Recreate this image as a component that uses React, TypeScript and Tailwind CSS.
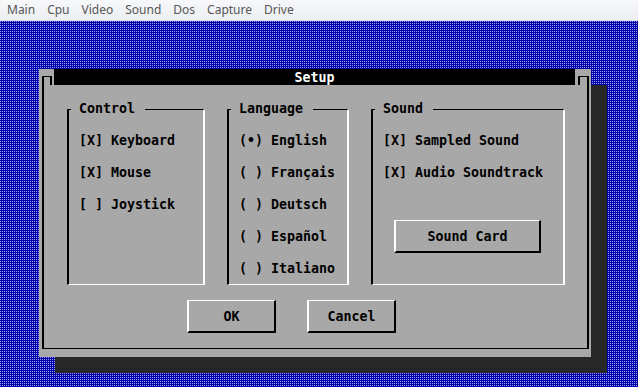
const menuItems = ["Main", "Cpu", "Video", "Sound", "Dos", "Capture", "Drive"];

const MenuBar = () => {
  return (
    <div className="h-[21px] flex-none flex items-center gap-[12px] pl-[7px] bg-linear-to-b from-[#f7f8fa] to-[#eceef2] border-b border-[#d9dde3] font-['Noto_Sans',sans-serif] text-[12px] text-[#565656]">
      {menuItems.map((item) => (
        <span key={item} className="leading-[20px]">{item}</span>
      ))}
    </div>
  );
};

interface GroupBoxProps {
  title: string;
  width: string;
  children: React.ReactNode;
}

const GroupBox = ({ title, width, children }: GroupBoxProps) => {
  return (
    <div className={`relative h-[176px] ${width} border-l-2 border-t border-r-2 border-b border-l-black border-t-black border-r-white border-b-white pt-[15px] pl-[10px]`}>
      <span className="absolute top-[-9px] left-[2px] pl-[8px] pr-[10px] bg-[#a8a8a8] leading-[16px]">{title}</span>
      {children}
    </div>
  );
};

const Row = ({ label }: { label: string }) => {
  return <div className="leading-[32px] whitespace-pre">{label}</div>;
};

const DosButton = ({ label, width }: { label: string; width: string }) => {
  return (
    <div className={`h-[33px] ${width} flex items-center justify-center pt-[2px] border-l-2 border-t border-r-2 border-b-2 border-l-white border-t-white border-r-black border-b-black`}>
      {label}
    </div>
  );
};

const SetupDialog = () => {
  return (
    <div className="w-[552px] h-[288px] flex flex-col bg-[#a8a8a8] shadow-[16px_16px_0_#272727] text-black font-['DejaVu_Sans_Mono','Liberation_Mono',monospace] text-[13.3px] font-bold">
      {/* title row */}
      <div className="h-[16px] flex-none flex">
        <div className="w-[3px]" />
        <div className="w-[10px] h-[9px] mt-[7px] border-l-2 border-t border-r-2 border-black" />
        <div className="w-[2px]" />
        <div className="w-[521px] bg-black text-white text-center leading-[16px] pt-px">Setup</div>
        <div className="w-[3px]" />
        <div className="w-[11px] h-[9px] mt-[7px] border-l-2 border-t border-r-2 border-black" />
        <div className="w-[2px]" />
      </div>

      {/* body */}
      <div className="h-[264px] flex-none ml-[3px] mr-[2px] border-l-2 border-r-2 border-b border-black pl-[23px] pt-[24px]">
        <div className="flex gap-[22px]">
          <GroupBox title="Control" width="w-[138px]">
            <Row label="[X] Keyboard" />
            <Row label="[X] Mouse" />
            <Row label="[ ] Joystick" />
          </GroupBox>
          <GroupBox title="Language" width="w-[122px]">
            <Row label="(•) English" />
            <Row label="( ) Français" />
            <Row label="( ) Deutsch" />
            <Row label="( ) Español" />
            <Row label="( ) Italiano" />
          </GroupBox>
          <GroupBox title="Sound" width="w-[194px]">
            <Row label="[X] Sampled Sound" />
            <Row label="[X] Audio Soundtrack" />
            <div className="mt-[31px] ml-[11px]">
              <DosButton label="Sound Card" width="w-[147px]" />
            </div>
          </GroupBox>
        </div>

        <div className="flex gap-[31px] mt-[15px] ml-[120px]">
          <DosButton label="OK" width="w-[89px]" />
          <DosButton label="Cancel" width="w-[89px]" />
        </div>
      </div>
    </div>
  );
};

export default function App() {
  return (
    <div className="w-[638px] h-[387px] flex flex-col overflow-hidden">
      <MenuBar />
      <div className="flex-1 bg-[#0000a8] bg-[image:conic-gradient(at_1px_1px,#0000a8_75%,#9c9cff_0)] bg-[length:2px_2px] pl-[39px] pt-[48px]">
        <SetupDialog />
      </div>
    </div>
  );
}
